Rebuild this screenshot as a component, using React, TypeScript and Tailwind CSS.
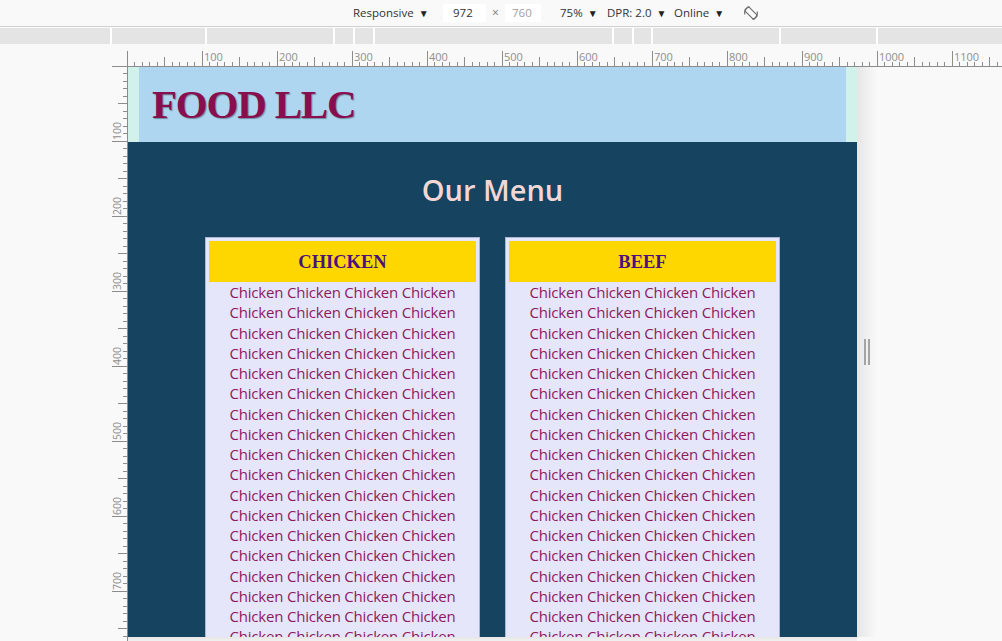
import React from "react";

const range = (n: number) => Array.from({ length: n }, (_, i) => i);
const RULER = "#8c8c8c";

function HRuler() {
  return (
    <svg width={890} height={23} className="block shrink-0">
      <line x1={0} y1={22.5} x2={890} y2={22.5} stroke={RULER} />
      {range(118).map((k) => {
        const x = 15 + Math.floor(7.5 * k) + 0.5;
        const h = k % 10 === 0 ? 16 : k % 5 === 0 ? 10 : 5;
        return (
          <g key={k}>
            <line x1={x} x2={x} y1={23 - h} y2={23} stroke={RULER} />
            {k % 10 === 0 && k > 0 && (
              <text x={x + 1.5} y={17} fontSize={11} fill="#8f8f8f" fontFamily="'Open Sans', sans-serif">
                {k * 10}
              </text>
            )}
          </g>
        );
      })}
    </svg>
  );
}

function VRuler() {
  return (
    <svg width={16} height={574} className="block shrink-0" overflow="visible">
      <line x1={15.5} y1={0} x2={15.5} y2={574} stroke={RULER} />
      {range(78).map((k) => {
        if (k === 0) return null;
        const y = -1 + Math.floor(7.5 * k) + 0.5;
        const w = k % 10 === 0 ? 16 : k % 5 === 0 ? 10 : 5;
        const ty = y - 1.5;
        return (
          <g key={k}>
            <line x1={16 - w} x2={16} y1={y} y2={y} stroke={RULER} />
            {k % 10 === 0 && (
              <text
                x={8.5}
                y={ty}
                fontSize={10.5}
                fill="#8f8f8f"
                fontFamily="'Open Sans', sans-serif"
                transform={`rotate(-90 8.5 ${ty})`}
              >
                {k * 10}
              </text>
            )}
          </g>
        );
      })}
    </svg>
  );
}

function RotateIcon() {
  return (
    <svg width="16" height="16" viewBox="0 0 16 16" fill="none" stroke="#6b6b6b" strokeWidth="1.1">
      <rect x="5.2" y="1.5" width="5.6" height="13" rx="1" transform="rotate(-45 8 8)" />
      <path d="M1.8 9.5A6.5 6.5 0 0 1 6.5 1.7" />
      <path d="M14.2 6.5A6.5 6.5 0 0 1 9.5 14.3" />
    </svg>
  );
}

function Toolbar() {
  const tri = <span className="ml-[5px] text-[10px] leading-none text-[#222]">▼</span>;
  return (
    <div
      className="h-[27px] shrink-0 border-b border-[#d2d2d2] bg-[#f9f9f9] flex items-center text-[11.5px] text-[#333]"
      style={{ fontFamily: "'Open Sans', 'Noto Sans', sans-serif" }}
    >
      <div className="ml-[353px] w-[90px] flex items-center">Responsive{tri}</div>
      <div className="w-[43px] h-[18px] bg-white flex items-center pl-[10px]">972</div>
      <div className="w-[19px] flex justify-center text-[#777] text-[12px]">×</div>
      <div className="w-[36px] h-[18px] bg-white flex items-center pl-[7px] text-[#a0a0a0]">760</div>
      <div className="ml-[19px] w-[47px] flex items-center">75%{tri}</div>
      <div className="w-[67px] flex items-center">DPR: 2.0{tri}</div>
      <div className="w-[69px] flex items-center">Online{tri}</div>
      <RotateIcon />
    </div>
  );
}

function MediaBar() {
  const segs = [95, 128, 20, 20, 239, 20, 19, 128, 97, 126];
  return (
    <div className="mt-[1px] h-[16px] shrink-0 flex bg-[#e4e4e4]">
      <div className="w-[110px] shrink-0" />
      {segs.map((w, i) => (
        <div key={i} className="shrink-0 border-l-2 border-white" style={{ width: w }} />
      ))}
    </div>
  );
}

function Card({ title, word }: { title: string; word: string }) {
  return (
    <div className="w-[275px] border border-[#a9b5d3] bg-[#e6e6fa] px-[3px] pt-[3px] shrink-0">
      <div
        className="h-[41px] pt-[2px] bg-[#ffd700] flex items-center justify-center text-[18.5px] font-bold text-[#4b0f7f]"
        style={{ fontFamily: "'Liberation Serif', serif" }}
      >
        {title}
      </div>
      <div
        className="flex flex-col items-center text-[15px] leading-[20.25px] tracking-[-0.2px] text-[#8e1a5e]"
        style={{ fontFamily: "'Open Sans', sans-serif" }}
      >
        {range(18).map((i) => (
          <div key={i}>
            {word} {word} {word} {word}
          </div>
        ))}
      </div>
    </div>
  );
}

function Viewport() {
  return (
    <div className="w-[729px] h-[570px] overflow-hidden flex flex-col bg-[#154360]">
      <header className="h-[75px] flex shrink-0">
        <div className="w-[11px] bg-[#d1f2eb]" />
        <div className="flex-1 bg-[#aed6f1] flex items-center pl-[13px]">
          <h1
            className="text-[41px] font-bold tracking-[-1.2px] text-[#880e4f] [text-shadow:1px_1px_1px_rgba(0,0,0,0.35)]"
            style={{ fontFamily: "'Liberation Serif', serif" }}
          >
            FOOD LLC
          </h1>
        </div>
        <div className="w-[11px] bg-[#d1f2eb]" />
      </header>
      <section className="flex flex-col items-center">
        <h2
          className="pt-[28px] text-[29px] leading-[40px] font-semibold text-[#f2d7d5]"
          style={{ fontFamily: "'Open Sans', sans-serif" }}
        >
          Our Menu
        </h2>
        <div className="mt-[27px] flex gap-[25px]">
          <Card title="CHICKEN" word="Chicken" />
          <Card title="BEEF" word="Chicken" />
        </div>
      </section>
    </div>
  );
}

export default function App() {
  return (
    <div className="w-[1002px] h-[641px] overflow-hidden bg-[#f9f9f9] flex flex-col">
      <Toolbar />
      <MediaBar />
      <div className="flex flex-col pl-[112px]">
        <HRuler />
        <div className="flex">
          <VRuler />
          <div className="flex flex-col shrink-0">
            <Viewport />
            <div className="h-[4px] bg-gradient-to-b from-[#e6e6e6] to-[#f1f1f1]" />
          </div>
          <div className="w-[20px] h-[570px] shrink-0 bg-gradient-to-r from-[#e6e6e6] to-[#f9f9f9] flex items-center justify-center gap-[2px]">
            <div className="w-[2px] h-[26px] bg-[#a3a3a3]" />
            <div className="w-[2px] h-[26px] bg-[#a3a3a3]" />
          </div>
        </div>
      </div>
    </div>
  );
}
